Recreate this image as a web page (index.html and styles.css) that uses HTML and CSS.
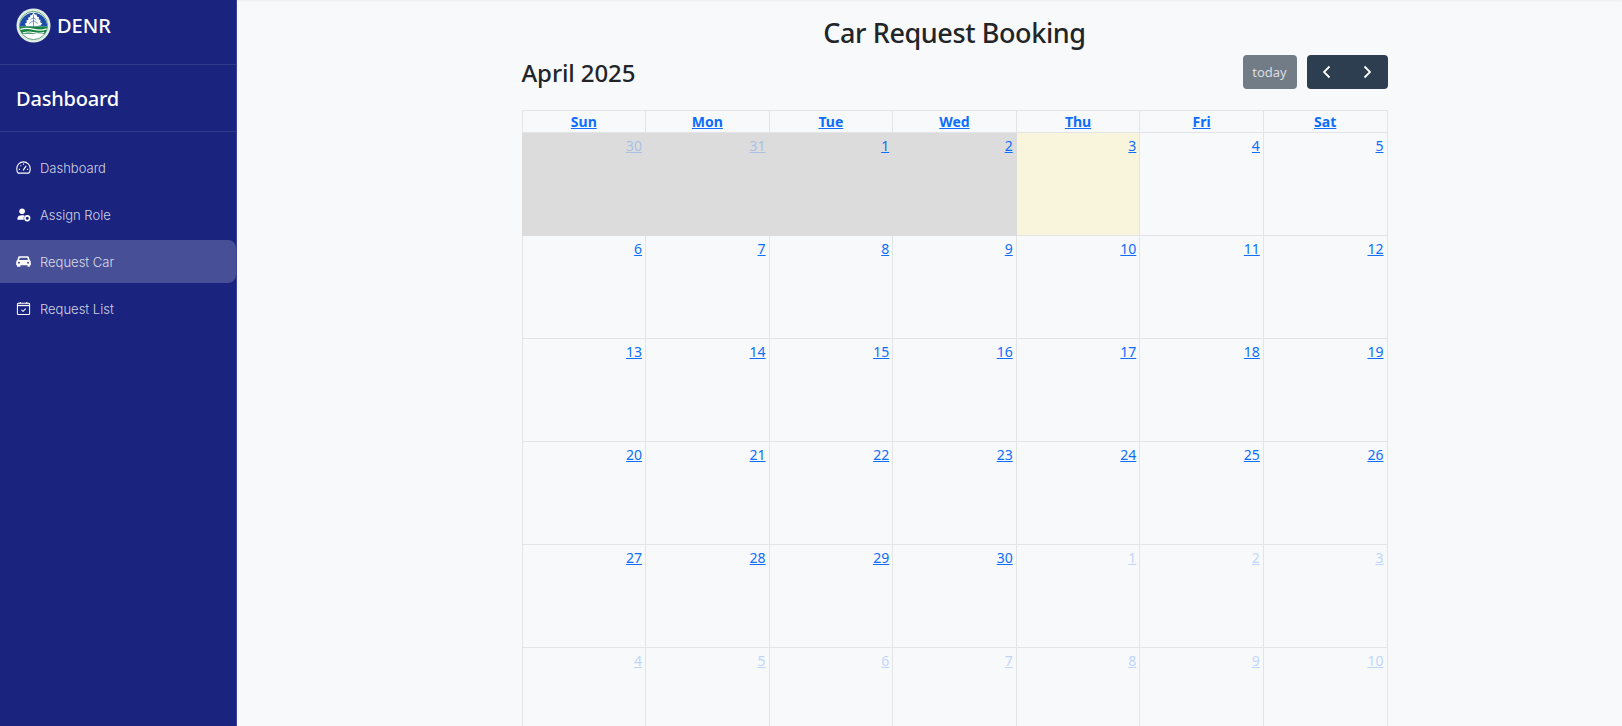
FILE: index.html
```html
<!DOCTYPE html>
<html lang="en">
<head>
  <meta charset="UTF-8">
  <title>Car Request Booking</title>
  <link rel="stylesheet" href="styles.css">
</head>
<body>
  <aside class="sidebar">
    <div class="brand">
      <svg class="logo" viewBox="0 0 36 36">
        <circle cx="18" cy="18" r="17.5" fill="#dfeee4"/>
        <circle cx="18" cy="18" r="14.5" fill="#fff" stroke="#5d9d78" stroke-width="1"/>
        <path d="M4 19a14 14 0 0 1 28 0z" fill="#1d4ca8"/>
        <path d="M18 4.500l1.600 2.500 1.400-.5.600 2.500 1.900.2-.2 2.300 2 .8-.4 2.400 2 1-1.400 2.300L18 19l-7.500-.5-1.400-2.300 2-1-.4-2.400 2-.8-.2-2.300 1.900-.2.600-2.500 1.400.5z" fill="#fff"/>
        <path d="M18 7v12M18 10l-3 2M18 10l3 2M18 13l-4.500 3M18 13l4.500 3" stroke="#1d4ca8" stroke-width=".6" fill="none"/>
        <path d="M3.800 19h28.400a14 14 0 0 1-2.400 7.500H6.200a14 14 0 0 1-2.400-7.500z" fill="#14833f"/>
        <path d="M4.500 22c6-2 10-1 14 0s9 1 13-.5M7 25.500c5-1.500 8-1 12 0s7 .5 10-.5" stroke="#fff" stroke-width="1.200" fill="none"/>
      </svg>
      <span>DENR</span>
    </div>
    <h2 class="side-title">Dashboard</h2>
    <nav class="side-nav">
      <a class="nav-item" href="#">
        <svg viewBox="0 0 16 16" fill="none" stroke="currentColor" stroke-width="1.100"><path d="M2.300 14h11.400c.9-1 1.500-2.800 1.500-4.800A7.200 7.200 0 0 0 .8 9.200c0 2 .6 3.800 1.500 4.800z"/><path d="M7.600 11l3.200-4.800" stroke-width="1.300"/><path d="M3 10h1.200M11.800 10H13M4.800 5.800l.8.8M8 3.800V5"/></svg>
        Dashboard
      </a>
      <a class="nav-item" href="#">
        <svg viewBox="0 0 16 16" fill="currentColor"><circle cx="6.500" cy="4.500" r="3"/><path d="M1.500 13.500v-1.200c0-2.200 2-3.500 5-3.500 1 0 1.900.1 2.600.4a4 4 0 0 0-.7 4.300z"/><circle cx="12" cy="12" r="2.500" fill="none" stroke="currentColor" stroke-width="1.700"/></svg>
        Assign Role
      </a>
      <a class="nav-item active" href="#">
        <svg viewBox="0 0 16 16" fill="currentColor"><path fill-rule="evenodd" d="M3.600 2.500h8.800c.6 0 1.100.4 1.300 1l1 3.200c.7.400 1.100 1 1.100 1.800v3.500h-1v1.500h-2.500V12H4.700v1.500H1.200V12H.2V8.500c0-.8.400-1.400 1.100-1.800l1-3.200c.2-.6.700-1 1.300-1zM4 4l-.8 2.500h9.600L12 4zM3.200 8.300a1.100 1.100 0 1 0 0 2.200 1.100 1.100 0 0 0 0-2.200zm9.600 0a1.100 1.100 0 1 0 0 2.200 1.100 1.100 0 0 0 0-2.200z"/></svg>
        Request Car
      </a>
      <a class="nav-item" href="#">
        <svg viewBox="0 0 16 16" fill="none" stroke="currentColor" stroke-width="1.100"><rect x="1.500" y="2.500" width="13" height="12" rx="1"/><path d="M1.500 4.800h13" stroke-width="1.400"/><path d="M4.500 1v2M11.500 1v2"/><path d="M5.800 9.500l1.700 1.600 2.900-2.900"/></svg>
        Request List
      </a>
    </nav>
  </aside>

  <main class="content">
    <div class="booking">
      <h1 class="page-title">Car Request Booking</h1>
      <div class="cal-toolbar">
        <h2 class="cal-month">April 2025</h2>
        <div class="cal-actions">
          <button class="btn btn-today">today</button>
          <div class="btn-group">
            <button class="btn btn-nav">
              <svg viewBox="0 0 16 16" fill="none" stroke="currentColor" stroke-width="1.800"><path d="M10.500 2.500L5 8l5.500 5.500"/></svg>
            </button>
            <button class="btn btn-nav">
              <svg viewBox="0 0 16 16" fill="none" stroke="currentColor" stroke-width="1.800"><path d="M5.500 2.500L11 8l-5.500 5.500"/></svg>
            </button>
          </div>
        </div>
      </div>
      <table class="calendar">
        <thead>
          <tr>
            <th><a href="#">Sun</a></th><th><a href="#">Mon</a></th><th><a href="#">Tue</a></th><th><a href="#">Wed</a></th><th><a href="#">Thu</a></th><th><a href="#">Fri</a></th><th><a href="#">Sat</a></th>
          </tr>
        </thead>
        <tbody>
          <tr>
            <td class="past other"><a href="#">30</a></td><td class="past other"><a href="#">31</a></td><td class="past"><a href="#">1</a></td><td class="past"><a href="#">2</a></td><td class="today"><a href="#">3</a></td><td><a href="#">4</a></td><td><a href="#">5</a></td>
          </tr>
          <tr>
            <td><a href="#">6</a></td><td><a href="#">7</a></td><td><a href="#">8</a></td><td><a href="#">9</a></td><td><a href="#">10</a></td><td><a href="#">11</a></td><td><a href="#">12</a></td>
          </tr>
          <tr>
            <td><a href="#">13</a></td><td><a href="#">14</a></td><td><a href="#">15</a></td><td><a href="#">16</a></td><td><a href="#">17</a></td><td><a href="#">18</a></td><td><a href="#">19</a></td>
          </tr>
          <tr>
            <td><a href="#">20</a></td><td><a href="#">21</a></td><td><a href="#">22</a></td><td><a href="#">23</a></td><td><a href="#">24</a></td><td><a href="#">25</a></td><td><a href="#">26</a></td>
          </tr>
          <tr>
            <td><a href="#">27</a></td><td><a href="#">28</a></td><td><a href="#">29</a></td><td><a href="#">30</a></td><td class="other"><a href="#">1</a></td><td class="other"><a href="#">2</a></td><td class="other"><a href="#">3</a></td>
          </tr>
          <tr>
            <td class="other"><a href="#">4</a></td><td class="other"><a href="#">5</a></td><td class="other"><a href="#">6</a></td><td class="other"><a href="#">7</a></td><td class="other"><a href="#">8</a></td><td class="other"><a href="#">9</a></td><td class="other"><a href="#">10</a></td>
          </tr>
        </tbody>
      </table>
    </div>
  </main>
</body>
</html>
```

FILE: styles.css
```css
html, body {
  height: 100%;
  margin: 0;
  overflow: hidden;
}
body {
  display: flex;
  font-family: "Noto Sans", sans-serif;
  background: #f8f9fa;
  color: #212529;
}
.sidebar {
  width: 237px;
  box-sizing: border-box;
  flex-shrink: 0;
  background: #1a237e;
  border-right: 1px solid #3a429b;
  color: #fff;
}
.brand {
  display: flex;
  align-items: center;
  gap: 6px;
  height: 65px;
  box-sizing: border-box;
  padding: 0 16px 14px;
  border-bottom: 1px solid rgba(255, 255, 255, 0.1);
  font-size: 20px;
  font-weight: 500;
}
.logo {
  width: 35px;
  height: 35px;
}
.side-title {
  margin: 0;
  height: 67px;
  line-height: 67px;
  box-sizing: border-box;
  padding-left: 16px;
  border-bottom: 1px solid rgba(255, 255, 255, 0.1);
  font-size: 20px;
  font-weight: 500;
  letter-spacing: -0.2px;
}
.side-nav {
  display: flex;
  flex-direction: column;
  gap: 4px;
  padding-top: 14px;
}
.nav-item {
  display: flex;
  align-items: center;
  gap: 9px;
  height: 43px;
  padding-left: 16px;
  border-radius: 0 8px 8px 0;
  color: rgba(255, 255, 255, 0.8);
  font-family: "Inter", sans-serif;
  font-size: 13px;
  font-weight: 300;
  text-decoration: none;
}
.nav-item svg {
  width: 15px;
  height: 15px;
  color: #fff;
}
.nav-item.active {
  background: rgba(255, 255, 255, 0.2);
}
.content {
  flex: 1;
  padding-left: 50px;
  min-width: 0;
  box-shadow: inset 0 3px 3px -2px rgba(0, 0, 0, 0.05);
}
.booking {
  width: 866px;
  margin: 0 auto;
}
.page-title {
  margin: 0;
  padding-top: 14px;
  text-align: center;
  font-size: 27px;
  font-weight: 500;
  letter-spacing: -0.4px;
  line-height: 38px;
}
.cal-toolbar {
  display: flex;
  justify-content: space-between;
  align-items: center;
  margin-top: 3px;
  margin-bottom: 21px;
}
.cal-month {
  margin: 0;
  font-size: 24px;
  font-weight: 500;
  letter-spacing: -0.1px;
}
.cal-actions {
  display: flex;
  gap: 10px;
}
.btn {
  height: 34px;
  border: 1px solid transparent;
  color: #fff;
  font-family: inherit;
  font-size: 13px;
  padding: 0;
}
.btn-today {
  width: 54px;
  background: #717c87;
  border-radius: 4px;
  color: rgba(255, 255, 255, 0.75);
}
.btn-group {
  display: flex;
  background: #2c3e50;
  border-radius: 4px;
}
.btn-nav {
  width: 40.5px;
  background: none;
}
.btn-nav svg {
  width: 16px;
  height: 16px;
  display: block;
  margin: 0 auto;
}
.calendar {
  width: 866px;
  table-layout: fixed;
  border-collapse: collapse;
  font-size: 14px;
}
.calendar th,
.calendar td {
  border: 1px solid #e2e4e7;
}
.calendar th {
  height: 21px;
  padding: 1px 0 0;
  box-sizing: border-box;
  font-weight: 700;
  line-height: 20px;
}
.calendar td {
  height: 103px;
  box-sizing: border-box;
  padding: 3px 3px;
  vertical-align: top;
  text-align: right;
}
.calendar a {
  color: #0d6efd;
}
.calendar td.past {
  background: #dcdcdc;
  border-color: #dcdcdc;
}
.calendar td.today {
  background: #f9f5dc;
}
.calendar td.other a {
  opacity: 0.25;
}
```
